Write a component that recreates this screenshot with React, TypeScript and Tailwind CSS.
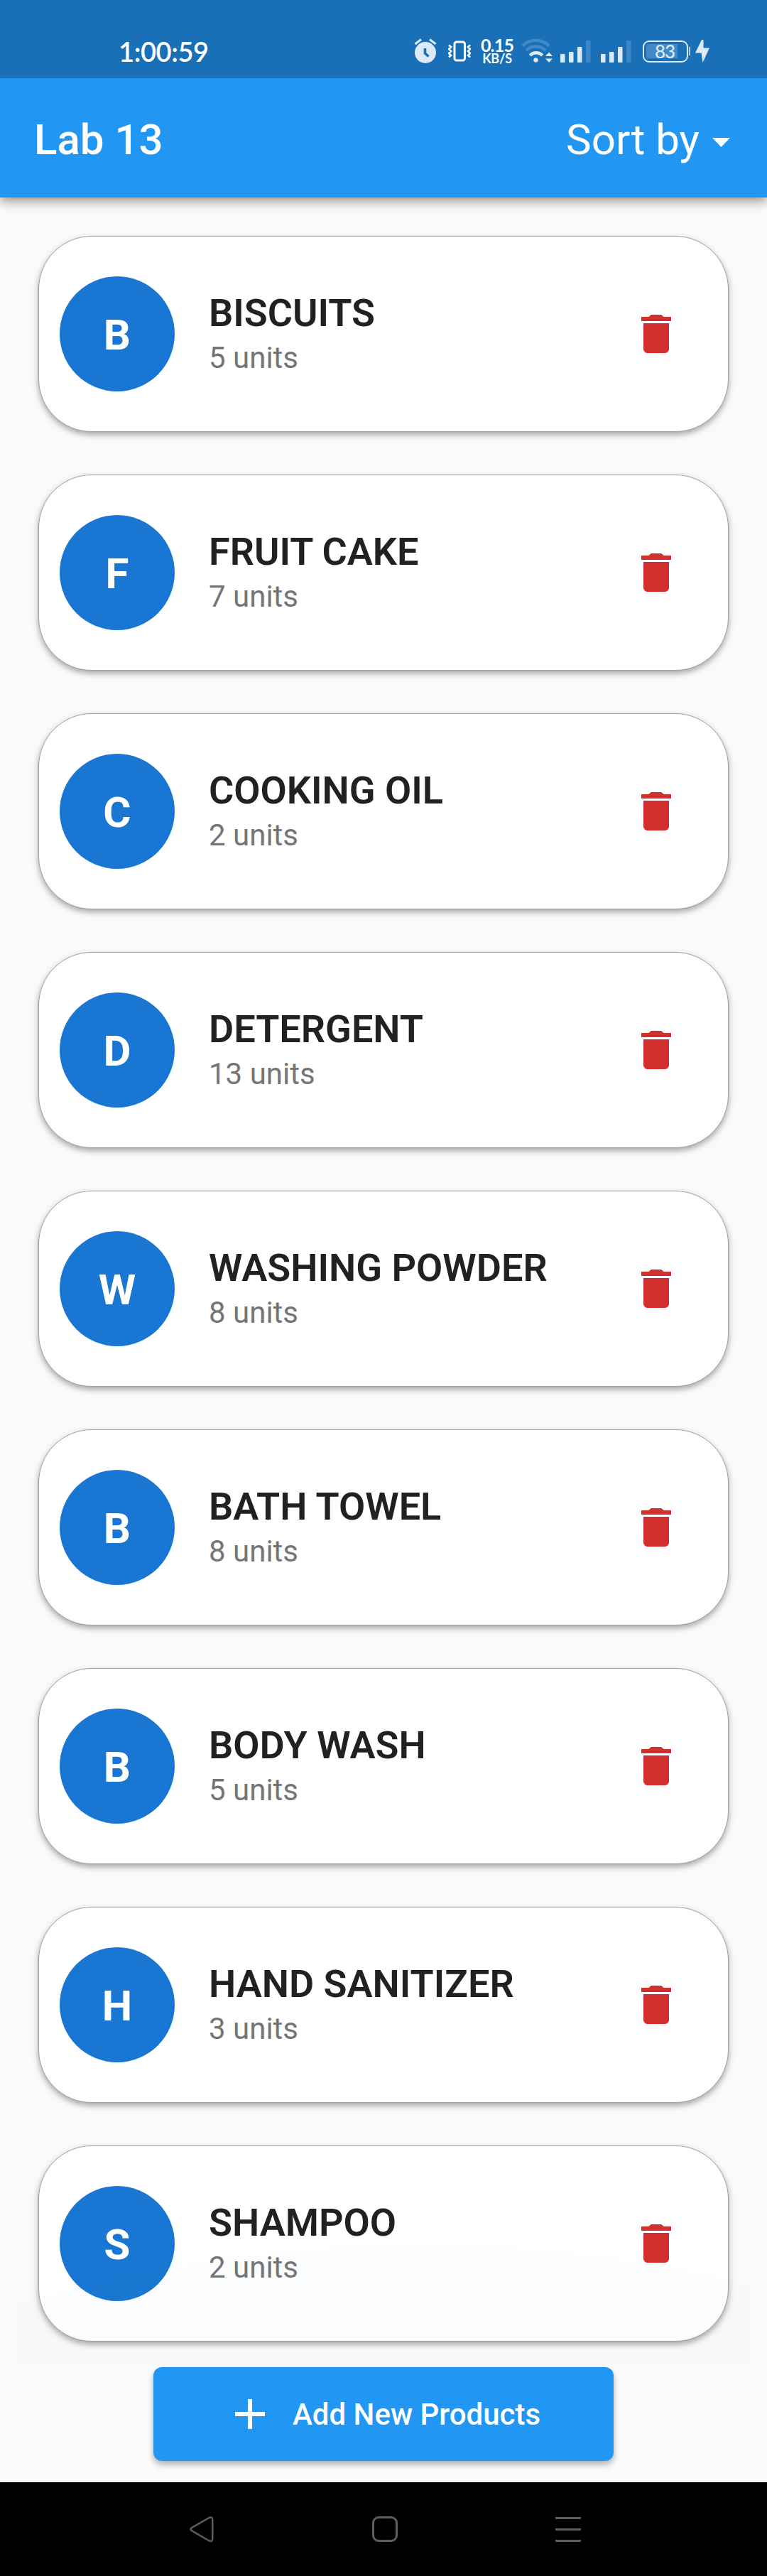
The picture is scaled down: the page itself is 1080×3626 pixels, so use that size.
const items: [string, number][] = [
  ['BISCUITS', 5],
  ['FRUIT CAKE', 7],
  ['COOKING OIL', 2],
  ['DETERGENT', 13],
  ['WASHING POWDER', 8],
  ['BATH TOWEL', 8],
  ['BODY WASH', 5],
  ['HAND SANITIZER', 3],
  ['SHAMPOO', 2],
];

function AlarmIcon() {
  return (
    <svg className="h-[36px] w-[32px] shrink-0" viewBox="0 0 32 36">
      <circle cx="16" cy="20" r="15" fill="#dce9f6" />
      <path d="M1.5 8 10 1.5M30.5 8 22 1.5" stroke="#dce9f6" strokeWidth="3" fill="none" />
      <path d="M15.5 14v7l5 4.5" stroke="#1a70b7" strokeWidth="3.6" fill="none" />
    </svg>
  );
}

function VibrateIcon() {
  return (
    <svg className="h-[30px] w-[32px] shrink-0" viewBox="0 0 32 30" fill="none" stroke="#fff">
      <rect x="9" y="2" width="14.5" height="26" rx="3" strokeWidth="3" />
      <path d="M1 6.5l3 2.5-3 3 3 3-3 3 3 3-3 2.5M31 6.5l-3 2.5 3 3-3 3 3 3-3 3 3 2.5" strokeWidth="2.6" />
    </svg>
  );
}

function WifiIcon() {
  return (
    <svg className="h-[36px] w-[45px] shrink-0" viewBox="0 0 45 36" fill="none">
      <g stroke="#4189c7" strokeWidth="4.5">
        <path d="M1.8 10.5a26.5 26.5 0 0 1 37.4 0" />
        <path d="M7 17a19 19 0 0 1 27 0" />
      </g>
      <path d="M12.3 24a12 12 0 0 1 17.4 0" stroke="#dce9f6" strokeWidth="4.5" />
      <circle cx="20.5" cy="30.5" r="3.2" fill="#dce9f6" />
      <path d="M39 19.500l5 5.500h-10zM39 34l5-5.500h-10z" fill="#dce9f6" />
    </svg>
  );
}

function SignalIcon() {
  return (
    <svg className="h-[31px] w-[43px] shrink-0" viewBox="0 0 43 31">
      <g fill="#dce9f6">
        <rect x="0" y="19" width="6.5" height="12" rx="1" />
        <rect x="12" y="16" width="6.5" height="15" rx="1" />
        <rect x="24" y="9" width="6.5" height="22" rx="1" />
      </g>
      <rect x="36" y="0" width="6.5" height="31" rx="1" fill="#3f88c6" />
    </svg>
  );
}

function StatusBar() {
  return (
    <div className="flex h-[110px] bg-[#1a70b7] text-white">
      <div className="ml-[167px] mt-[48px] w-[416px] font-['Lato'] text-[38px] leading-[48px] font-semibold tracking-[-0.4px]">
        1:00:59
      </div>
      <div className="mt-[54px] flex h-[36px] items-center">
        <AlarmIcon />
        <div className="ml-[16px]"><VibrateIcon /></div>
        <div className="ml-[14px] flex w-[46px] flex-col items-center font-['Lato'] font-bold">
          <span className="text-[25px] leading-[21px] tracking-[-0.8px]">0.15</span>
          <span className="text-[18px] leading-[17px] tracking-[-0.2px]">KB/S</span>
        </div>
        <div className="ml-[11px]"><WifiIcon /></div>
        <div className="ml-[10px]"><SignalIcon /></div>
        <div className="ml-[14px]"><SignalIcon /></div>
        <div className="ml-[16px] flex h-[31px] w-[64px] items-center rounded-[9px] border-2 border-[#dce9f6] p-[3px]">
          <div className="h-[20px] w-[44px] rounded-l-[4px] bg-[#4189c7] pl-[12px] font-['Lato'] text-[26px] leading-[20px] font-medium tracking-[-1px] text-[#dce9f6]">
            83
          </div>
        </div>
        <div className="ml-px h-[12px] w-[2px] bg-[#a8cae8]" />
        <svg className="ml-[7px] h-[32px] w-[20px]" viewBox="0 0 20 32">
          <path d="M9 0 0 18.5h8.5L10.5 32 20 11.5h-8.5V0z" fill="#dce9f6" />
        </svg>
      </div>
    </div>
  );
}

function ProductCard({ name, units }: { name: string; units: number }) {
  return (
    <div className="flex h-[276px] items-center rounded-[75px] border border-[#a0a0a0] bg-white pl-[29px] pr-[65px] shadow-[0_4px_8px_rgba(0,0,0,0.34)]">
      <div className="flex size-[162px] items-center justify-center rounded-full bg-[#1976d2] pt-[4px] text-[60px] leading-none font-bold text-white">
        {name[0]}
      </div>
      <div className="ml-[48px] flex grow flex-col pt-[4px]">
        <div className="text-[54px] leading-[63px] font-semibold text-[#212121]">{name}</div>
        <div className="text-[42px] leading-[63px] text-[#757575]">{units} units</div>
      </div>
      <svg className="size-[72px]" viewBox="0 0 24 24" fill="#d32f2f">
        <path d="M6 19c0 1.1.9 2 2 2h8c1.1 0 2-.9 2-2V7H6v12zM19 4h-3.500l-.7-.7Q14.500 3 14 3h-4q-.5 0-.8.300L8.500 4H5v2h14V4z" />
      </svg>
    </div>
  );
}

export default function App() {
  return (
    <div className="relative flex h-[3626px] w-[1080px] flex-col bg-[#fafafa] font-['Roboto',sans-serif]">
      <div className="shadow-[0_6px_14px_rgba(0,0,0,0.38)]">
        <StatusBar />
        <div className="flex h-[168px] items-center justify-between bg-[#2196f3] pl-[48px] pr-[52px] pt-[5px] text-[60px] leading-[70px] text-white">
          <div className="font-medium">Lab 13</div>
          <div className="flex items-center">
            Sort by
            <svg className="ml-[18px] mt-[7px] h-[13px] w-[25px]" viewBox="0 0 25 13">
              <path d="M0 0h25L12.5 13z" fill="#fff" />
            </svg>
          </div>
        </div>
      </div>
      <div className="flex flex-col gap-[60px] px-[54px] pt-[54px]">
        {items.map(([name, units]) => (
          <ProductCard key={name} name={name} units={units} />
        ))}
      </div>
      <div className="mt-[36px] flex justify-center">
        <button className="flex h-[132px] w-[648px] items-center rounded-[12px] bg-[#2196f3] pl-[100px] text-[42px] font-medium text-white shadow-[0_5px_8px_rgba(0,0,0,0.3)]">
          <svg className="size-[72px]" viewBox="0 0 24 24" fill="#fff">
            <path d="M19 13h-6v6h-2v-6H5v-2h6V5h2v6h6v2z" />
          </svg>
          <span className="ml-[24px] pt-px">Add New Products</span>
        </button>
      </div>
      <div className="mt-auto flex h-[132px] items-center bg-black pl-[266px]">
        <svg className="h-[44px] w-[36px]" viewBox="0 0 36 44" fill="none" stroke="#5e5e5e" strokeWidth="2.5">
          <path d="M28.5 6 4 20q-3 2.2 0 4.3L28.5 38.5q4.5 2 4.8-2.5V8.5q-.3-4.5-4.8-2.5z" />
        </svg>
        <div className="ml-[222px] h-[36px] w-[36px] rounded-[9px] border-[3px] border-[#5e5e5e]" />
        <div className="ml-[222px] flex w-[36px] flex-col gap-[13px]">
          <div className="h-[3px] bg-[#5e5e5e]" />
          <div className="h-[3px] bg-[#5e5e5e]" />
          <div className="h-[3px] bg-[#5e5e5e]" />
        </div>
      </div>
      <svg className="pointer-events-none absolute left-[24px] top-[3160px] h-[166px] w-[1032px]" viewBox="0 0 1032 166">
        <path d="M0 85.5A1938 1938 0 0 1 1032 56V166H0z" fill="#2060c0" fillOpacity="0.014" />
      </svg>
    </div>
  );
}
